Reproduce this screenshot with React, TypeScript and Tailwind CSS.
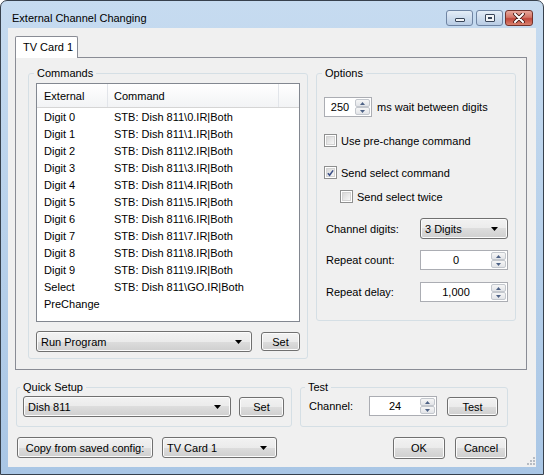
import React from "react";

const face =
  "bg-[linear-gradient(#f2f2f2_0%,#ebebeb_50%,#dddddd_50%,#cfcfcf_100%)] border border-[#707070] rounded-[3px] shadow-[inset_0_0_0_1px_#fbfbfb]";

function Arrow() {
  return (
    <svg width="7" height="4" viewBox="0 0 7 4" className="shrink-0">
      <path d="M0 0h7L3.5 4z" fill="#000" />
    </svg>
  );
}

function Combo({ text, className }: { text: string; className: string }) {
  return (
    <div className={`${face} ${className} flex items-center pl-[4px] pr-[9px]`}>
      <span className="flex-1">{text}</span>
      <Arrow />
    </div>
  );
}

function Btn({ text, className, focus }: { text: string; className: string; focus?: boolean }) {
  return (
    <div
      className={`${face} ${className} flex items-center justify-center ${
        focus ? "border-[#3c7fb1] shadow-[inset_0_0_0_1px_#c6e4f8]" : ""
      }`}
    >
      {text}
    </div>
  );
}

function SpinHalf({ up }: { up?: boolean }) {
  return (
    <div className="flex-1 flex items-center justify-center border border-[#c3c7cd] rounded-[2px] bg-linear-to-b from-[#f6f6f6] to-[#e2e4e8]">
      <svg width="5" height="3" viewBox="0 0 5 3">
        <path d={up ? "M0 3h5L2.5 0z" : "M0 0h5L2.5 3z"} fill="#4d6185" />
      </svg>
    </div>
  );
}

function Spin({ value, className }: { value: string; className: string }) {
  return (
    <div className={`${className} flex border border-[#abadb3] bg-white`}>
      <div className="flex-1 flex items-center justify-center">{value}</div>
      <div className="w-[16px] flex flex-col py-[1px] pr-[1px]">
        <SpinHalf up />
        <SpinHalf />
      </div>
    </div>
  );
}

function Check({ checked, label }: { checked?: boolean; label: string }) {
  return (
    <div className="flex items-center h-[13px] gap-[4px]">
      <div className="w-[13px] h-[13px] border border-[#8e8f8f] bg-white p-[1px] shrink-0">
        <div className="w-full h-full border border-[#d4d4d4] bg-linear-to-br from-[#d8d8d8] to-[#f7f7f7] flex items-center justify-center">
          {checked && (
            <svg width="8" height="8" viewBox="0 0 8 8">
              <path d="M1 4.2l2 2.3L7 1" stroke="#3b4f87" strokeWidth="1.8" fill="none" />
            </svg>
          )}
        </div>
      </div>
      <span>{label}</span>
    </div>
  );
}

const rows: [string, string][] = [
  ["Digit 0", "STB: Dish 811\\0.IR|Both"],
  ["Digit 1", "STB: Dish 811\\1.IR|Both"],
  ["Digit 2", "STB: Dish 811\\2.IR|Both"],
  ["Digit 3", "STB: Dish 811\\3.IR|Both"],
  ["Digit 4", "STB: Dish 811\\4.IR|Both"],
  ["Digit 5", "STB: Dish 811\\5.IR|Both"],
  ["Digit 6", "STB: Dish 811\\6.IR|Both"],
  ["Digit 7", "STB: Dish 811\\7.IR|Both"],
  ["Digit 8", "STB: Dish 811\\8.IR|Both"],
  ["Digit 9", "STB: Dish 811\\9.IR|Both"],
  ["Select", "STB: Dish 811\\GO.IR|Both"],
  ["PreChange", ""],
];

export default function App() {
  return (
    <div className="w-[544px] h-[475px] flex flex-col rounded-t-[7px] border border-[#37414d] bg-linear-to-b from-[#c6dbf0] to-[#a9c6e5] text-[11px] leading-[14px] text-black font-['Liberation_Sans',Arial,sans-serif] overflow-hidden">
      {/* title bar */}
      <div className="h-[27px] flex items-start shrink-0">
        <span className="pl-[11px] pt-[10px]">External Channel Changing</span>
        <div className="ml-auto mr-[10px] mt-[9px] flex">
          <div className="w-[27px] h-[16px] rounded-[3px] border border-[#6f84a3] bg-linear-to-b from-[#e4edf7] to-[#b8cce4] flex items-end justify-center pb-[3px]">
            <div className="w-[10px] h-[4px] border border-[#39465a] bg-[#f2f4f7] rounded-[1px]" />
          </div>
          <div className="ml-[3px] w-[27px] h-[16px] rounded-[3px] border border-[#6f84a3] bg-linear-to-b from-[#e4edf7] to-[#b8cce4] flex items-center justify-center">
            <div className="w-[10px] h-[8px] border border-[#39465a] bg-[#f2f4f7] rounded-[1px] flex items-center justify-center">
              <div className="w-[4px] h-[2px] border border-[#39465a]" />
            </div>
          </div>
          <div className="ml-[2px] w-[28px] h-[16px] rounded-[3px] border border-[#73332c] bg-[linear-gradient(#e8a89c_0%,#d27466_45%,#c0463a_55%,#d9826f_100%)] flex items-center justify-center">
            <svg width="12" height="10" viewBox="0 0 12 10">
              <path d="M2 1l8 8M10 1l-8 8" stroke="#3b1410" strokeWidth="3.6" strokeLinecap="round" />
              <path d="M2 1l8 8M10 1l-8 8" stroke="#fff" strokeWidth="2" strokeLinecap="round" />
            </svg>
          </div>
        </div>
      </div>

      {/* client area */}
      <div className="relative mx-[7px] w-[528px] h-[439px] bg-[#f0f0f0] pt-[8px] flex flex-col">
        <div className="pl-[7px]">
          <div className="flex">
            <div className="relative z-10 -mb-[1px] w-[63px] h-[22px] border border-b-0 border-[#898c95] rounded-t-[2px] bg-white pl-[7px] pt-[3px]">
              TV Card 1
            </div>
          </div>
          <div className="w-[512px] h-[313px] border border-[#898c95] bg-[#f0f0f0] pl-[12px] pt-[8px] flex items-start gap-[8px]">
            {/* Commands */}
            <fieldset className="w-[280px] h-[293px] shrink-0 border border-[#d5dfe5] rounded-[3px] px-[7px]">
              <legend className="ml-[-2px] px-[3px]">Commands</legend>
              <div className="mt-[3px] w-[264px] h-[239px] border border-[#828790] bg-white flex flex-col">
                <div className="h-[24px] flex border-b border-[#d5d5d5] bg-linear-to-b from-white to-[#f2f3f5]">
                  <div className="w-[71px] pl-[7px] flex items-center border-r border-[#e2e5ea]">External</div>
                  <div className="w-[171px] pl-[6px] flex items-center border-r border-[#e2e5ea]">Command</div>
                  <div className="flex-1" />
                </div>
                {rows.map(([a, b]) => (
                  <div key={a} className="h-[17px] flex items-center">
                    <div className="w-[71px] pl-[7px]">{a}</div>
                    <div className="pl-[6px]">{b}</div>
                  </div>
                ))}
              </div>
              <div className="mt-[9px] flex items-start gap-[9px]">
                <Combo text="Run Program" className="w-[216px] h-[21px]" />
                <Btn text="Set" className="mt-[1px] w-[39px] h-[19px]" />
              </div>
            </fieldset>

            {/* Options */}
            <fieldset className="w-[200px] h-[255px] shrink-0 border border-[#d5dfe5] rounded-[3px] px-[7px]">
              <legend className="ml-[-2px] px-[3px]">Options</legend>
              <div className="mt-[17px] flex items-center gap-[5px]">
                <Spin value="250" className="w-[48px] h-[20px]" />
                <span>ms wait between digits</span>
              </div>
              <div className="mt-[17px]">
                <Check label="Use pre-change command" />
              </div>
              <div className="mt-[19px]">
                <Check checked label="Send select command" />
              </div>
              <div className="mt-[11px] pl-[16px]">
                <Check label="Send select twice" />
              </div>
              <div className="mt-[15px] flex items-center">
                <span className="w-[96px] pl-[2px]">Channel digits:</span>
                <Combo text="3 Digits" className="w-[88px] h-[21px]" />
              </div>
              <div className="mt-[11px] flex items-center">
                <span className="w-[96px] pl-[2px]">Repeat count:</span>
                <Spin value="0" className="w-[88px] h-[20px]" />
              </div>
              <div className="mt-[12px] flex items-center">
                <span className="w-[96px] pl-[2px]">Repeat delay:</span>
                <Spin value="1,000" className="w-[88px] h-[20px]" />
              </div>
            </fieldset>
          </div>
        </div>

        {/* quick setup + test */}
        <div className="mt-[10px] pl-[8px] flex gap-[8px]">
          <fieldset className="w-[276px] h-[47px] border border-[#d5dfe5] rounded-[3px] px-[6px]">
            <legend className="ml-[-3px] px-[3px]">Quick Setup</legend>
            <div className="mt-[2px] flex items-start gap-[8px]">
              <Combo text="Dish 811" className="w-[208px] h-[21px]" />
              <Btn text="Set" className="mt-[1px] w-[45px] h-[20px]" />
            </div>
          </fieldset>
          <fieldset className="w-[208px] h-[47px] border border-[#d5dfe5] rounded-[3px] pl-[8px]">
            <legend className="ml-[-4px] px-[3px]">Test</legend>
            <div className="mt-[2px] flex items-start">
              <span className="w-[60px] h-[20px] flex items-center">Channel:</span>
              <Spin value="24" className="w-[68px] h-[20px]" />
              <Btn text="Test" className="ml-[10px] mt-[1px] w-[51px] h-[19px]" />
            </div>
          </fieldset>
        </div>

        {/* bottom buttons */}
        <div className="mt-[10px] pl-[9px] pr-[29px] flex items-start">
          <Btn text="Copy from saved config:" className="w-[136px] h-[21px]" />
          <Combo text="TV Card 1" className="ml-[9px] w-[115px] h-[21px]" />
          <Btn text="OK" focus className="ml-auto w-[52px] h-[22px]" />
          <Btn text="Cancel" className="ml-[10px] w-[52px] h-[22px]" />
        </div>

        {/* size grip */}
        <svg width="8" height="8" viewBox="0 0 8 8" className="absolute right-[1px] bottom-[2px]">
          {[
            [6, 0],
            [6, 3],
            [3, 3],
            [6, 6],
            [3, 6],
            [0, 6],
          ].map(([x, y]) => (
            <rect key={`${x}-${y}`} x={x} y={y} width="2" height="2" fill="#b7bcc3" />
          ))}
        </svg>
      </div>
    </div>
  );
}
